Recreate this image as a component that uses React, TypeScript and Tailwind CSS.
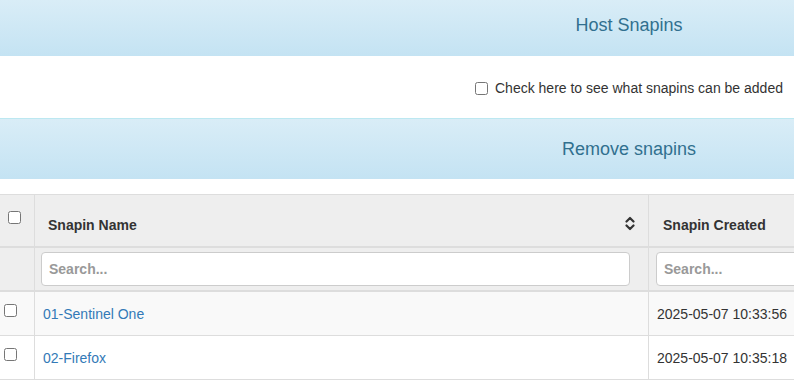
import React from "react";

const SortIcon = () => (
  <svg width="10" height="15" viewBox="0 0 10 15" className="shrink-0">
    <path d="M1.5 5.5 L5 2 L8.5 5.5" fill="none" stroke="#333" strokeWidth="2.2" strokeLinecap="round" strokeLinejoin="round" />
    <path d="M1.5 9.5 L5 13 L8.5 9.5" fill="none" stroke="#333" strokeWidth="2.2" strokeLinecap="round" strokeLinejoin="round" />
  </svg>
);

export default function App() {
  const rows = [
    { name: "01-Sentinel One", date: "2025-05-07 10:33:56", bg: "bg-[#f9f9f9]" },
    { name: "02-Firefox", date: "2025-05-07 10:35:18", bg: "bg-white" },
  ];
  return (
    <div className="w-[794px] h-[380px] overflow-hidden bg-white" style={{ fontFamily: '"Liberation Sans", Arial, sans-serif' }}>
      <div className="w-[1258px] text-[14px] text-[#333]">
        <div className="h-[56px] bg-gradient-to-b from-[#d9edf7] to-[#c4e3f3] flex items-center justify-center pb-[6px] text-[18px] text-[#31708f]">
          Host Snapins
        </div>
        <div className="h-[62px] flex items-center justify-center pt-[2px]">
          <label className="flex items-center gap-[7px]">
            <input type="checkbox" className="m-0 w-[13px] h-[13px]" />
            <span>Check here to see what snapins can be added</span>
          </label>
        </div>
        <div className="h-[61px] border-t border-[#bce8f1] bg-gradient-to-b from-[#d9edf7] to-[#c4e3f3] flex items-center justify-center text-[18px] text-[#31708f]">
          Remove snapins
        </div>
        <div className="h-[15px]" />
        <div className="border-t border-[#ddd]">
          {/* header row */}
          <div className="flex h-[53px] bg-[#eee] border-b-2 border-[#ddd]">
            <div className="w-[35px] border-r border-[#ddd] pl-[8px] pt-[16px]">
              <input type="checkbox" className="m-0 w-[13px] h-[13px] block" />
            </div>
            <div className="w-[614px] border-r border-[#ddd] flex items-start justify-between pl-[13px] pr-[13px] pt-[20px] font-bold">
              <span>Snapin Name</span>
              <span className="pt-[1px]"><SortIcon /></span>
            </div>
            <div className="w-[220px] border-r border-[#ddd] pl-[14px] pt-[20px] font-bold">Snapin Created</div>
            <div className="flex-1" />
          </div>
          {/* filter row */}
          <div className="flex h-[44px] bg-[#eee] border-b-2 border-[#ddd]">
            <div className="w-[35px] border-r border-[#ddd]" />
            <div className="w-[614px] border-r border-[#ddd] pl-[6px] pr-[18px] pt-[4px]">
              <input
                placeholder="Search..."
                className="w-full h-[34px] bg-white border border-[#ccc] rounded-[4px] pl-[7px] font-bold text-[14px] placeholder:text-[#999] outline-none"
              />
            </div>
            <div className="w-[220px] border-r border-[#ddd] pl-[7px] pr-[8px] pt-[4px]">
              <input
                placeholder="Search..."
                className="w-full h-[34px] bg-white border border-[#ccc] rounded-[4px] pl-[7px] font-bold text-[14px] placeholder:text-[#999] outline-none"
              />
            </div>
            <div className="flex-1" />
          </div>
          {rows.map((r) => (
            <div key={r.name} className={`flex h-[44px] border-b border-[#ddd] ${r.bg}`}>
              <div className="w-[35px] border-r border-[#ddd] pl-[4px] pt-[12px]">
                <input type="checkbox" className="m-0 w-[13px] h-[13px] block" />
              </div>
              <div className="w-[614px] border-r border-[#ddd] pl-[8px] pt-[2px] flex items-center">
                <a className="text-[#337ab7]">{r.name}</a>
              </div>
              <div className="w-[220px] border-r border-[#ddd] pl-[8px] pt-[2px] flex items-center">{r.date}</div>
              <div className="flex-1" />
            </div>
          ))}
        </div>
      </div>
    </div>
  );
}
